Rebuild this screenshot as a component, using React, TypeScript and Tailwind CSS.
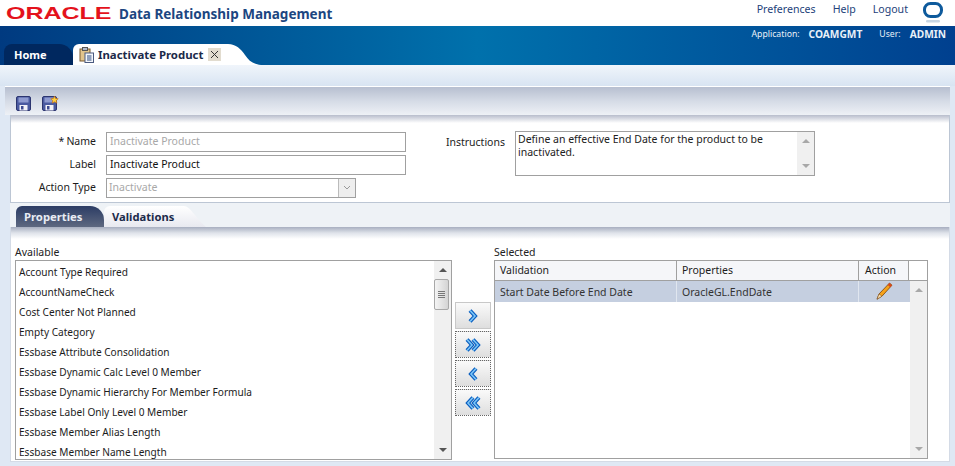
const AVAILABLE = [
  "Account Type Required",
  "AccountNameCheck",
  "Cost Center Not Planned",
  "Empty Category",
  "Essbase Attribute Consolidation",
  "Essbase Dynamic Calc Level 0 Member",
  "Essbase Dynamic Hierarchy For Member Formula",
  "Essbase Label Only Level 0 Member",
  "Essbase Member Alias Length",
  "Essbase Member Name Length",
];

function ScrollBar({ thumb, muted }: { thumb?: boolean; muted?: boolean }) {
  return (
    <div className="w-[17px] shrink-0 h-full bg-[#f0f0f0] flex flex-col items-center justify-between py-[7px] relative">
      <div className={`w-0 h-0 border-x-[4px] border-x-transparent border-b-[4px] ${muted ? "border-b-[#a8a8a8]" : "border-b-[#555]"}`} />
      {thumb && (
        <div className="absolute top-[18px] left-0 w-[15px] h-[31px] bg-gradient-to-r from-[#f4f4f4] to-[#d4d4d4] border border-[#a8a8a8] rounded-[2px] flex flex-col gap-[1px] items-center justify-center">
          <div className="w-[7px] h-[1px] bg-[#777]" />
          <div className="w-[7px] h-[1px] bg-[#777]" />
          <div className="w-[7px] h-[1px] bg-[#777]" />
          <div className="w-[7px] h-[1px] bg-[#777]" />
        </div>
      )}
      <div className={`w-0 h-0 border-x-[4px] border-x-transparent border-t-[4px] ${muted ? "border-t-[#a8a8a8]" : "border-t-[#555]"}`} />
    </div>
  );
}

function Floppy({ star }: { star?: boolean }) {
  return (
    <svg width="17" height="15" viewBox="0 0 17 15">
      <rect x="0.5" y="0.5" width="14" height="14" rx="1.5" fill="#4a5aa0" stroke="#2c3570" />
      <rect x="2.5" y="1.5" width="10" height="5" fill="#8f9bd0" />
      <rect x="3.5" y="9" width="8" height="5.5" fill="#f2f2f8" />
      <rect x="5" y="10" width="2.5" height="3.5" fill="#3c4a90" />
      {star && (
        <path d="M12.5 0l1.1 2.4 2.6.3-1.9 1.8.5 2.6-2.3-1.3-2.3 1.3.5-2.6-1.9-1.8 2.6-.3z" fill="#ffd23c" stroke="#c0701a" strokeWidth="0.7" />
      )}
    </svg>
  );
}

function ShuttleButton({ dir, double, dotted }: { dir: "right" | "left"; double?: boolean; dotted?: boolean }) {
  const pts = dir === "right" ? "M3 1.5 L8 7 L3 12.5" : "M9 1.5 L4 7 L9 12.5";
  const pts2 = dir === "right" ? "M9 1.5 L14 7 L9 12.5" : "M15 1.5 L10 7 L15 12.5";
  return (
    <div
      className={`w-[36px] h-[27px] border flex items-center justify-center bg-gradient-to-b from-[#fafafa] to-[#dedede] ${
        dotted ? "border-dotted border-[#666]" : "border-[#c8c8c8]"
      }`}
    >
      <svg width={double ? 18 : 12} height="14" viewBox={double ? "0 0 18 14" : "0 0 12 14"}>
        <path d={pts} fill="none" stroke="#0b5fc0" strokeWidth="4" />
        <path d={pts} fill="none" stroke="#7cc6f8" strokeWidth="1.6" />
        {double && <path d={pts2} fill="none" stroke="#0b5fc0" strokeWidth="4" />}
        {double && <path d={pts2} fill="none" stroke="#7cc6f8" strokeWidth="1.6" />}
      </svg>
    </div>
  );
}

function Field({ label, star, children }: { label: string; star?: boolean; children: React.ReactNode }) {
  return (
    <div className="flex items-center h-[23px]">
      <div className="w-[85px] text-right text-[#1c1c1c]">
        {star && <span className="mr-[2px]">*</span>}
        {label}
      </div>
      <div className="ml-[10px]">{children}</div>
    </div>
  );
}

export default function App() {
  return (
    <div className="w-[955px] h-[466px] overflow-hidden bg-[#dfe8f4] text-[10.5px] leading-none text-[#222] font-['Noto_Sans',sans-serif]">
      {/* Branding */}
      <header className="h-[26px] bg-white flex items-start">
        <div className="w-[119px] pl-[6px] pt-[5px] h-[26px]">
          <span className="block origin-left scale-x-[1.47] text-[#e4121c] font-bold text-[17px] leading-[18px] font-['Liberation_Sans',sans-serif]">
            ORACLE
          </span>
        </div>
        <div className="text-[#1c4681] font-bold text-[13.5px] leading-[16px] mt-[6px]">Data Relationship Management</div>
        <nav className="ml-auto flex items-start gap-[17px] text-[#23427a] mt-[4px] text-[10.6px] leading-[11px]">
          <span>Preferences</span>
          <span>Help</span>
          <span>Logout</span>
        </nav>
        <svg className="ml-[15px] mr-[12px] mt-[2px]" width="20" height="22" viewBox="0 0 20 22">
          <rect x="1.5" y="1.5" width="17" height="13" rx="6" fill="none" stroke="#0e5a9c" strokeWidth="3" />
          <rect x="3" y="18" width="14" height="2.5" rx="1.2" fill="#c8d6e4" />
        </svg>
      </header>

      {/* Blue band */}
      <div className="h-[39px] bg-gradient-to-r from-[#003a80] via-[#0071ac] to-[#00408f] flex flex-col">
        <div className="h-[18px] flex items-start justify-end pr-[9px] pt-[3px] text-[8.7px] leading-[10px] text-[#e8f0f8] gap-[9px]">
          <span>Application:</span>
          <span className="font-bold text-[10.2px] mr-[8px]">COAMGMT</span>
          <span>User:</span>
          <span className="font-bold text-[10.2px]">ADMIN</span>
        </div>
        <div className="h-[21px] flex items-end pl-[4px]">
          <div className="w-[69px] h-[21px] bg-[#00285f] rounded-tl-[8px] rounded-tr-[14px] text-[11px] text-white font-bold flex items-center pl-[10px]">
            Home
          </div>
          <div className="h-[21px] bg-white rounded-tl-[6px] flex items-center pl-[6px]">
            <svg width="15" height="16" viewBox="0 0 15 16">
              <rect x="1" y="2" width="10" height="12" fill="#e2c48c" stroke="#7a5a30" />
              <rect x="3.5" y="0.5" width="5" height="3" fill="#b0b8c8" stroke="#555" />
              <rect x="6" y="6" width="8.5" height="9.5" fill="#f4f6fa" stroke="#4a5a80" />
              <path d="M8 9h4.5M8 11h4.5M8 13h4.5" stroke="#2c4a80" />
            </svg>
            <span className="ml-[4px] font-bold text-[11.4px] text-[#1c2a4a]">Inactivate Product</span>
            <span className="ml-[5px] w-[13px] h-[13px] bg-[#e2dccf] text-[#333] flex items-center justify-center">
              <svg width="9" height="9" viewBox="0 0 9 9">
                <path d="M1 1l7 7M8 1l-7 7" stroke="#333" strokeWidth="1" />
              </svg>
            </span>
            <span className="w-[7px]" />
          </div>
          <svg width="33" height="21" viewBox="0 0 33 21" className="shrink-0">
            <path d="M0 0 C8 0 13 5 17 11 C21 17 25 20 33 21 L0 21 Z" fill="#fff" />
          </svg>
        </div>
      </div>

      {/* Pale band */}
      <div className="h-[21px] bg-gradient-to-b from-[#f0f5fb] to-[#d8e4f2]" />

      {/* Panel */}
      <main className="ml-[5px] mr-[5px] flex flex-col h-[376px]">
        <div className="h-[29px] bg-gradient-to-b from-[#b7bfd0] via-[#d5dbe6] to-[#eef1f6] border-t border-white flex items-center pl-[11px] gap-[9px] pt-[5px]">
          <Floppy />
          <Floppy star />
        </div>

        <div className="ml-[5px] flex flex-col">
          {/* Form */}
          <section className="h-[88px] bg-white border-x border-b border-[#bcc6d4] flex flex-col">
            <div className="h-[8px] shrink-0 bg-gradient-to-b from-[#b8bdcc] to-white" />
            <div className="flex">
              <div className="w-[404px] pt-[7px]">
                <Field label="Name" star>
                  <div className="w-[300px] h-[20px] border border-[#a0a0a0] px-[3px] flex items-center text-[#a8a8a8]">Inactivate Product</div>
                </Field>
                <Field label="Label">
                  <div className="w-[300px] h-[20px] border border-[#a0a0a0] px-[3px] flex items-center text-[#111]">Inactivate Product</div>
                </Field>
                <Field label="Action Type">
                  <div className="w-[250px] h-[20px] border border-[#a0a0a0] flex items-center text-[#a8a8a8] pl-[2px]">
                    <span className="flex-1">Inactivate</span>
                    <span className="w-[17px] h-full bg-[#eeeeee] border-l border-[#bbb] flex items-center justify-center">
                      <svg width="8" height="5" viewBox="0 0 8 5">
                        <path d="M1 1l3 3 3-3" fill="none" stroke="#999" />
                      </svg>
                    </span>
                  </div>
                </Field>
              </div>
              <div className="flex pt-[8px]">
                <div className="w-[90px] text-right pt-[6px]">Instructions</div>
                <div className="ml-[10px] w-[300px] h-[45px] border border-[#a0a0a0] flex">
                  <div className="flex-1 px-[2px] py-[1px] leading-[13px] text-[#222]">
                    Define an effective End Date for the product to be inactivated.
                  </div>
                  <ScrollBar muted />
                </div>
              </div>
            </div>
          </section>

          {/* Sub tabs */}
          <div className="h-[24px] bg-[#eef2f6] flex items-end pl-[6px] pt-[3px]">
            <div className="w-[88px] h-[21px] rounded-tl-[6px] rounded-tr-[14px] bg-gradient-to-b from-[#2c3c64] to-[#5e6880] text-[11.3px] text-[#e8ecf4] font-bold flex items-center pl-[8px]">
              Properties
            </div>
            <div className="w-[80px] h-[21px] rounded-tl-[6px] bg-gradient-to-b from-white to-[#e8e9f0] text-[11.2px] text-[#1c2a4a] font-bold flex items-center pl-[8px]">
              Validations
            </div>
            <svg width="22" height="21" viewBox="0 0 22 21">
              <defs>
                <linearGradient id="tabFade" x1="0" y1="0" x2="0" y2="1">
                  <stop offset="0" stopColor="#ffffff" />
                  <stop offset="1" stopColor="#e8e9f0" />
                </linearGradient>
              </defs>
              <path d="M0 0 C6 0 12 12 22 21 L0 21 Z" fill="url(#tabFade)" />
            </svg>
          </div>

          {/* Shuttle */}
          <section className="h-[235px] bg-white border-x border-b border-[#d4dbe6] flex flex-col">
            <div className="h-[12px] bg-gradient-to-b from-[#a8afc0] via-[#dfe3ea] to-white" />
            <div className="flex pl-[4px] flex-1">
              <div className="w-[437px] flex flex-col">
                <div className="h-[21px] flex items-center pt-[6px]">Available</div>
                <div className="h-[200px] border border-[#a0a0a0] flex">
                  <ul className="flex-1 text-[10.1px] pt-[1px] overflow-hidden">
                    {AVAILABLE.map((name) => (
                      <li key={name} className="h-[20px] pl-[3px] flex items-center text-[#1c1c1c]">
                        {name}
                      </li>
                    ))}
                  </ul>
                  <ScrollBar thumb />
                </div>
              </div>
              <div className="w-[42px] flex flex-col items-start pl-[3px] gap-[2px] pt-[63px]">
                <ShuttleButton dir="right" />
                <ShuttleButton dir="right" double dotted />
                <ShuttleButton dir="left" dotted />
                <ShuttleButton dir="left" double dotted />
              </div>
              <div className="w-[434px] flex flex-col">
                <div className="h-[21px] flex items-center pt-[6px]">Selected</div>
                <div className="h-[199px] border border-[#a0a0a0] flex flex-col">
                  <div className="flex h-[20px] border-b border-[#a0a0a0] text-[#1c1c1c]">
                    <div className="w-[182px] flex items-center pl-[5px] bg-[#f5f6f9] border-r border-[#a0a0a0]">Validation</div>
                    <div className="w-[182px] flex items-center pl-[5px] bg-[#f5f6f9] border-r border-[#a0a0a0]">Properties</div>
                    <div className="w-[50px] flex items-center pl-[6px] bg-[#f5f6f9] border-r border-[#a0a0a0]">Action</div>
                  </div>
                  <div className="flex flex-1">
                    <div className="w-[415px]">
                      <div className="flex h-[21px] bg-[#c5cfe0] text-[#333]">
                        <div className="w-[182px] flex items-center pl-[5px] pt-[1px] border-r border-[#e0e6ef]">Start Date Before End Date</div>
                        <div className="w-[182px] flex items-center pl-[5px] pt-[1px] border-r border-[#e0e6ef]">OracleGL.EndDate</div>
                        <div className="w-[50px] flex items-center justify-center">
                          <svg width="18" height="19" viewBox="0 0 18 19">
                            <path d="M14.5 1l2.5 2.2-10 11-5 3 2-5.2z" fill="#f6a21a" stroke="#6a3400" strokeWidth="0.7" />
                            <path d="M14.5 1l2.5 2.2-1.8 2-2.5-2.2z" fill="#d8481c" />
                            <path d="M4 12l3 2.2-5 3z" fill="#f4dcb0" stroke="#6a3400" strokeWidth="0.4" />
                          </svg>
                        </div>
                      </div>
                    </div>
                    <div className="flex-1 flex justify-end">
                      <ScrollBar muted />
                    </div>
                  </div>
                </div>
              </div>
            </div>
          </section>
        </div>
      </main>
    </div>
  );
}
